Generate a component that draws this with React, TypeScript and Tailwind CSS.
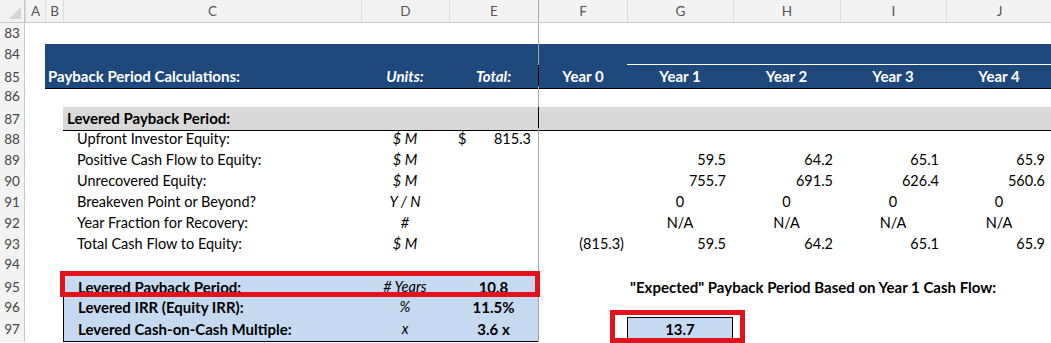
import type { ReactNode } from 'react'

const grid = 'grid grid-cols-[25px_20px_18px_298px_88px_89px_89px_106px_107px_106px_106px]'
const frozen = 'border-l border-[#a6a6a6]'
const bold = 'font-bold text-[15px]'

const letters = ['A', 'B', 'C', 'D', 'E', 'F', 'G', 'H', 'I', 'J']

type Line = {
  n: number
  label: string
  unit: string
  values: string[] // F..J
  center?: boolean
}

const detail: Line[] = [
  { n: 89, label: 'Positive Cash Flow to Equity:', unit: '$ M', values: ['', '59.5', '64.2', '65.1', '65.9'] },
  { n: 90, label: 'Unrecovered Equity:', unit: '$ M', values: ['', '755.7', '691.5', '626.4', '560.6'] },
  { n: 91, label: 'Breakeven Point or Beyond?', unit: 'Y / N', values: ['', '0', '0', '0', '0'], center: true },
  { n: 92, label: 'Year Fraction for Recovery:', unit: '#', values: ['', 'N/A', 'N/A', 'N/A', 'N/A'], center: true },
  { n: 93, label: 'Total Cash Flow to Equity:', unit: '$ M', values: ['(815.3)', '59.5', '64.2', '65.1', '65.9'] },
]

function RowNum({ n }: { n: number }) {
  return (
    <div className="flex items-center justify-center bg-[#f3f3f3] border-r border-[#c8c8c8] text-[13.5px] text-[#444]">
      {n}
    </div>
  )
}

function Row({ n, children }: { n: number; children: ReactNode }) {
  return (
    <div className={`${grid} h-[21px]`}>
      <RowNum n={n} />
      {children}
    </div>
  )
}

function Blank({ n }: { n: number }) {
  return (
    <Row n={n}>
      <div />
      <div />
      <div />
      <div />
      <div />
      <div className={frozen} />
      <div />
      <div />
      <div />
      <div />
    </Row>
  )
}

export default function App() {
  return (
    <div className="relative w-[1051px] h-[343px] overflow-hidden bg-white font-['Lato',sans-serif] text-[14.5px] text-black">
      {/* column letters */}
      <div className={`${grid} h-[23px] bg-[#f3f3f3] border-b border-[#c8c8c8]`}>
        <div className="relative border-r border-[#c8c8c8]">
          <svg className="absolute right-[3px] bottom-[3px]" width="12" height="12" viewBox="0 0 12 12">
            <polygon points="12,0 12,12 0,12" fill="#d4d4d4" />
          </svg>
        </div>
        {letters.map((l) => (
          <div
            key={l}
            className={`flex items-center justify-center text-[13.5px] text-[#555] ${
              l === 'F' ? frozen : 'border-l border-[#dcdcdc]'
            }`}
          >
            {l}
          </div>
        ))}
      </div>

      <Blank n={83} />

      {/* blue header band */}
      <Row n={84}>
        <div />
        <div className="bg-[#1f497d]" />
        <div className="bg-[#1f497d]" />
        <div className="bg-[#1f497d]" />
        <div className="bg-[#1f497d]" />
        <div className={`bg-[#1f497d] ${frozen}`} />
        <div className="bg-[#1f497d] border-b border-white" />
        <div className="bg-[#1f497d] border-b border-white" />
        <div className="bg-[#1f497d] border-b border-white" />
        <div className="bg-[#1f497d] border-b border-white" />
      </Row>
      <Row n={85}>
        <div />
        <div className={`col-span-2 flex items-center bg-[#1f497d] border-b border-black pl-[3px] whitespace-nowrap text-white ${bold}`}>
          Payback Period Calculations:
        </div>
        <div className={`flex items-center justify-center bg-[#1f497d] border-b border-black italic text-white ${bold}`}>
          Units:
        </div>
        <div className={`flex items-center justify-center bg-[#1f497d] border-b border-black italic text-white ${bold}`}>
          Total:
        </div>
        {['Year 0', 'Year 1', 'Year 2', 'Year 3', 'Year 4'].map((y) => (
          <div
            key={y}
            className={`flex items-center justify-center bg-[#1f497d] border-b border-black text-white ${bold} ${
              y === 'Year 0' ? frozen : ''
            }`}
          >
            {y}
          </div>
        ))}
      </Row>

      <Blank n={86} />

      {/* section title */}
      <Row n={87}>
        <div />
        <div />
        <div className={`flex items-center bg-[#d9d9d9] border-b border-black pl-[4px] whitespace-nowrap ${bold}`}>
          Levered Payback Period:
        </div>
        <div className="bg-[#d9d9d9] border-b border-black" />
        <div className="bg-[#d9d9d9] border-b border-black" />
        <div className={`bg-[#d9d9d9] border-b border-black ${frozen}`} />
        <div className="bg-[#d9d9d9] border-b border-black" />
        <div className="bg-[#d9d9d9] border-b border-black" />
        <div className="bg-[#d9d9d9] border-b border-black" />
        <div className="bg-[#d9d9d9] border-b border-black" />
      </Row>

      <Row n={88}>
        <div />
        <div />
        <div className="flex items-center pl-[14px] whitespace-nowrap">Upfront Investor Equity:</div>
        <div className="flex items-center justify-center italic">$ M</div>
        <div className="flex items-center justify-between pl-[9px] pr-[7px]">
          <span>$</span>
          <span>815.3</span>
        </div>
        <div className={frozen} />
        <div />
        <div />
        <div />
        <div />
      </Row>

      {detail.map((d) => (
        <Row key={d.n} n={d.n}>
          <div />
          <div />
          <div className="flex items-center pl-[14px] whitespace-nowrap">{d.label}</div>
          <div className="flex items-center justify-center italic">{d.unit}</div>
          <div />
          {d.values.map((v, i) => (
            <div
              key={i}
              className={`flex items-center ${
                d.center ? 'justify-center' : v.startsWith('(') ? 'justify-end pr-[3px]' : 'justify-end pr-[7px]'
              } ${i === 0 ? frozen : ''}`}
            >
              {v}
            </div>
          ))}
        </Row>
      ))}

      <Blank n={94} />

      {/* summary block */}
      <Row n={95}>
        <div />
        <div />
        <div className={`flex items-center bg-[#c5d9f1] border-l border-t border-black pl-[14px] whitespace-nowrap ${bold}`}>
          Levered Payback Period:
        </div>
        <div className="flex items-center justify-center bg-[#c5d9f1] border-t border-black italic">
          # Years
        </div>
        <div className={`flex items-center justify-center bg-[#c5d9f1] border-t border-black ${bold}`}>10.8</div>
        <div className={frozen} />
        <div className={`flex items-center pl-[3px] whitespace-nowrap ${bold}`}>
          "Expected" Payback Period Based on Year 1 Cash Flow:
        </div>
        <div />
        <div />
        <div />
      </Row>
      <Row n={96}>
        <div />
        <div />
        <div className={`flex items-center bg-[#c5d9f1] border-l border-black pl-[14px] whitespace-nowrap ${bold}`}>
          Levered IRR (Equity IRR):
        </div>
        <div className="flex items-center justify-center bg-[#c5d9f1] italic">%</div>
        <div className={`flex items-center justify-center bg-[#c5d9f1] ${bold}`}>11.5%</div>
        <div className={frozen} />
        <div />
        <div />
        <div />
        <div />
      </Row>
      <Row n={97}>
        <div />
        <div />
        <div className={`flex items-center bg-[#c5d9f1] border-l border-b border-black pl-[14px] whitespace-nowrap ${bold}`}>
          Levered Cash-on-Cash Multiple:
        </div>
        <div className="flex items-center justify-center bg-[#c5d9f1] border-b border-black italic">x</div>
        <div className={`flex items-center justify-center bg-[#c5d9f1] border-b border-black ${bold}`}>3.6 x</div>
        <div className={frozen} />
        <div className={`flex items-center justify-center bg-[#c5d9f1] border border-black ${bold}`}>13.7</div>
        <div />
        <div />
        <div />
      </Row>

      {/* red highlight boxes */}
      <div className="absolute left-[60px] top-[271px] w-[480px] h-[26px] border-[5px] border-[#e3131b]" />
      <div className="absolute left-[610px] top-[310px] w-[135px] h-[33px] border-[5px] border-[#e3131b]" />
    </div>
  )
}
